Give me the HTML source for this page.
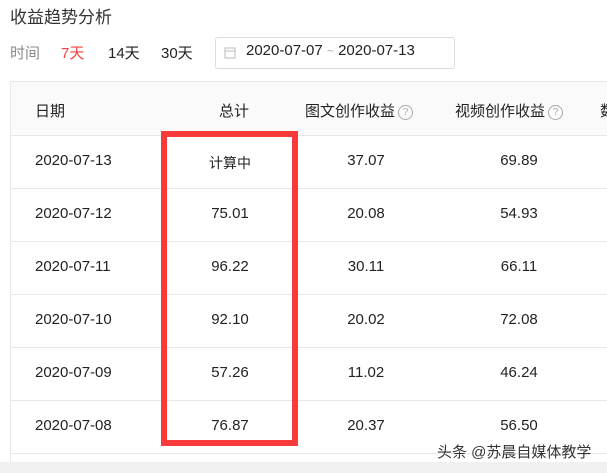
<!DOCTYPE html>
<html><head><meta charset="utf-8"><style>
body{margin:0;width:607px;height:473px;overflow:hidden;background:#fff;font-family:"Liberation Sans","Noto Sans CJK SC",sans-serif;position:relative;color:#222}
.a{position:absolute;white-space:nowrap}
.title{left:10px;top:3px;font-size:17px;color:#333}
.t{top:42px;font-size:15px}
.date{left:215px;top:37px;width:240px;height:32px;border:1px solid #ddd;border-radius:3px;box-sizing:border-box}
.tbl{left:10px;top:81px;width:620px;height:390px;border:1px solid #e8e8e8;box-sizing:border-box}
.hdr{left:11px;top:82px;width:600px;height:53px;background:#fafafa;border-bottom:1px solid #e8e8e8}
.line{left:11px;width:600px;height:1px;background:#e8e8e8}
.c{font-size:15px;color:#222}
.q{display:inline-block;width:13px;height:13px;border:1px solid #aaa;border-radius:50%;font-size:10px;line-height:13px;text-align:center;color:#aaa;vertical-align:1px;margin-left:3px}
</style></head><body>
<div class="a title">收益趋势分析</div>
<div class="a t" style="left:10px;color:#888">时间</div>
<div class="a t" style="left:61px;color:#f5413d">7天</div>
<div class="a t" style="left:108px">14天</div>
<div class="a t" style="left:161px">30天</div>
<div class="a date"></div>
<svg class="a" style="left:224px;top:46px" width="12" height="13"><rect x="1" y="2" width="10" height="10" fill="none" stroke="#bbb"/><line x1="1" y1="5" x2="11" y2="5" stroke="#bbb"/></svg>
<div class="a t" style="left:246px">2020-07-07 <span style="color:#aaa;font-size:12px">~</span> 2020-07-13</div>
<div class="a tbl"></div>
<div class="a hdr"></div>
<div class="a c" style="left:35px;top:100px">日期</div>
<div class="a c" style="left:219px;top:100px">总计</div>
<div class="a c" style="left:305px;top:100px">图文创作收益<span class="q">?</span></div>
<div class="a c" style="left:455px;top:100px">视频创作收益<span class="q">?</span></div>
<div class="a c" style="left:600px;top:100px">数</div>
<div class="a line" style="top:188px"></div>
<div class="a line" style="top:241px"></div>
<div class="a line" style="top:294px"></div>
<div class="a line" style="top:347px"></div>
<div class="a line" style="top:400px"></div>
<div class="a line" style="top:453px"></div>

<div class="a c" style="left:35px;top:152px">2020-07-13</div><div class="a c" style="left:200px;top:153px;width:60px;text-align:center;font-size:14px">计算中</div><div class="a c" style="left:336px;top:152px;width:60px;text-align:center">37.07</div><div class="a c" style="left:489px;top:152px;width:60px;text-align:center">69.89</div>
<div class="a c" style="left:35px;top:205px">2020-07-12</div><div class="a c" style="left:200px;top:205px;width:60px;text-align:center">75.01</div><div class="a c" style="left:336px;top:205px;width:60px;text-align:center">20.08</div><div class="a c" style="left:489px;top:205px;width:60px;text-align:center">54.93</div>
<div class="a c" style="left:35px;top:258px">2020-07-11</div><div class="a c" style="left:200px;top:258px;width:60px;text-align:center">96.22</div><div class="a c" style="left:336px;top:258px;width:60px;text-align:center">30.11</div><div class="a c" style="left:489px;top:258px;width:60px;text-align:center">66.11</div>
<div class="a c" style="left:35px;top:311px">2020-07-10</div><div class="a c" style="left:200px;top:311px;width:60px;text-align:center">92.10</div><div class="a c" style="left:336px;top:311px;width:60px;text-align:center">20.02</div><div class="a c" style="left:489px;top:311px;width:60px;text-align:center">72.08</div>
<div class="a c" style="left:35px;top:364px">2020-07-09</div><div class="a c" style="left:200px;top:364px;width:60px;text-align:center">57.26</div><div class="a c" style="left:336px;top:364px;width:60px;text-align:center">11.02</div><div class="a c" style="left:489px;top:364px;width:60px;text-align:center">46.24</div>
<div class="a c" style="left:35px;top:417px">2020-07-08</div><div class="a c" style="left:200px;top:417px;width:60px;text-align:center">76.87</div><div class="a c" style="left:336px;top:417px;width:60px;text-align:center">20.37</div><div class="a c" style="left:489px;top:417px;width:60px;text-align:center">56.50</div>

<div class="a" style="left:161px;top:131px;width:137px;height:315px;border:6px solid #f83a3a;box-sizing:border-box"></div>
<div class="a" style="left:0;top:462px;width:607px;height:11px;background:#f0f0f0"></div>
<div class="a" style="left:437px;top:441px;font-size:15px;color:#333;text-shadow:0 0 2px #fff,0 0 2px #fff,0 0 1px #fff">头条 @苏晨自媒体教学</div>
</body></html>
